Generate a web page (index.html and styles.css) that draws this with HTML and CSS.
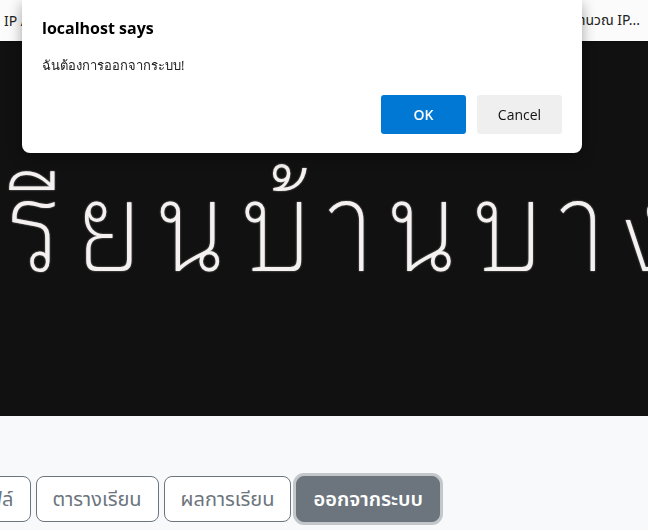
FILE: index.html
```html
<!DOCTYPE html>
<html lang="th">
<head>
<meta charset="utf-8">
<title>โรงเรียนบ้านบาง</title>
<link rel="stylesheet" href="styles.css">
</head>
<body>
<header class="topbar">
  <span class="nav-item">IP Address</span>
  <span class="nav-item">คำนวณ IP...</span>
</header>
<section class="hero">
  <h1 class="hero-title">เรียนบ้านบางกระเจ้า</h1>
</section>
<section class="menu">
  <div class="menu-row">
    <button class="btn">หน้าแรก</button>
    <button class="btn">โปรไฟล์</button>
    <button class="btn">ตารางเรียน</button>
    <button class="btn">ผลการเรียน</button>
    <button class="btn btn-active">ออกจากระบบ</button>
  </div>
</section>
<div class="dialog" role="alertdialog">
  <div class="dialog-title">localhost says</div>
  <div class="dialog-msg">ฉันต้องการออกจากระบบ!</div>
  <div class="dialog-actions">
    <button class="dbtn dbtn-ok">OK</button>
    <button class="dbtn dbtn-cancel">Cancel</button>
  </div>
</div>
</body>
</html>
```
FILE: styles.css
```css
* { box-sizing: border-box; }
html, body { margin: 0; padding: 0; }
body {
  width: 648px;
  height: 530px;
  overflow: hidden;
  background: #f8f9fa;
  font-family: "Noto Sans", "Noto Sans Thai", "Open Sans", sans-serif;
}
.topbar {
  height: 41px;
  background: #fbfbfb;
  display: flex;
  justify-content: space-between;
  align-items: center;
  padding: 0 8px 0 4px;
  box-shadow: 0 1px 2px rgba(0,0,0,.25);
  position: relative;
  z-index: 1;
  font-size: 14px;
  color: #222;
}
.hero {
  height: 375px;
  background: #111;
  overflow: hidden;
  display: flex;
  align-items: center;
  padding-bottom: 27px;
}
.hero-title {
  margin: 0;
  white-space: nowrap;
  font-family: "Noto Sans Thai Looped", "Noto Sans Thai", sans-serif;
  font-weight: 200;
  font-size: 125px;
  color: #f6f1f1;
  text-indent: -44px;
  letter-spacing: 18px;
  text-shadow: 0 0 2px #999;
  transform: scaleX(0.9);
  transform-origin: 0 50%;
}
.menu {
  height: 114px;
  padding-top: 60px;
}
.menu-row {
  width: 440px;
  display: flex;
  justify-content: flex-end;
  gap: 5px;
}
.btn {
  flex: none;
  font-family: inherit;
  font-size: 20px;
  line-height: 1.5;
  padding: 7px 16px;
  border: 1px solid #6c757d;
  border-radius: 8px;
  background: #fff;
  color: #6c757d;
}
.btn-active {
  background: #6c757d;
  color: #fff;
  font-weight: 600;
  box-shadow: 0 0 0 3px rgba(130,138,145,.45);
}
.dialog {
  position: fixed;
  top: 0;
  left: 22px;
  width: 560px;
  height: 153px;
  background: #fff;
  border-radius: 0 0 8px 8px;
  box-shadow: 0 4px 14px rgba(0,0,0,.35);
  padding: 17px 20px 0 20px;
  z-index: 10;
  font-family: "Open Sans", "Noto Sans", sans-serif;
}
.dialog-title {
  font-size: 16px;
  font-weight: 700;
  color: #000;
  line-height: 22px;
}
.dialog-msg {
  font-size: 13px;
  color: #222;
  margin-top: 17px;
  line-height: 18px;
}
.dialog-actions {
  display: flex;
  justify-content: flex-end;
  gap: 11px;
  margin-top: 21px;
}
.dbtn {
  width: 85px;
  height: 39px;
  border: none;
  border-radius: 3px;
  font-family: inherit;
  font-size: 14px;
}
.dbtn-ok {
  background: #0078d4;
  color: #fff;
  font-weight: 600;
}
.dbtn-cancel {
  background: #efefef;
  color: #111;
}
```
